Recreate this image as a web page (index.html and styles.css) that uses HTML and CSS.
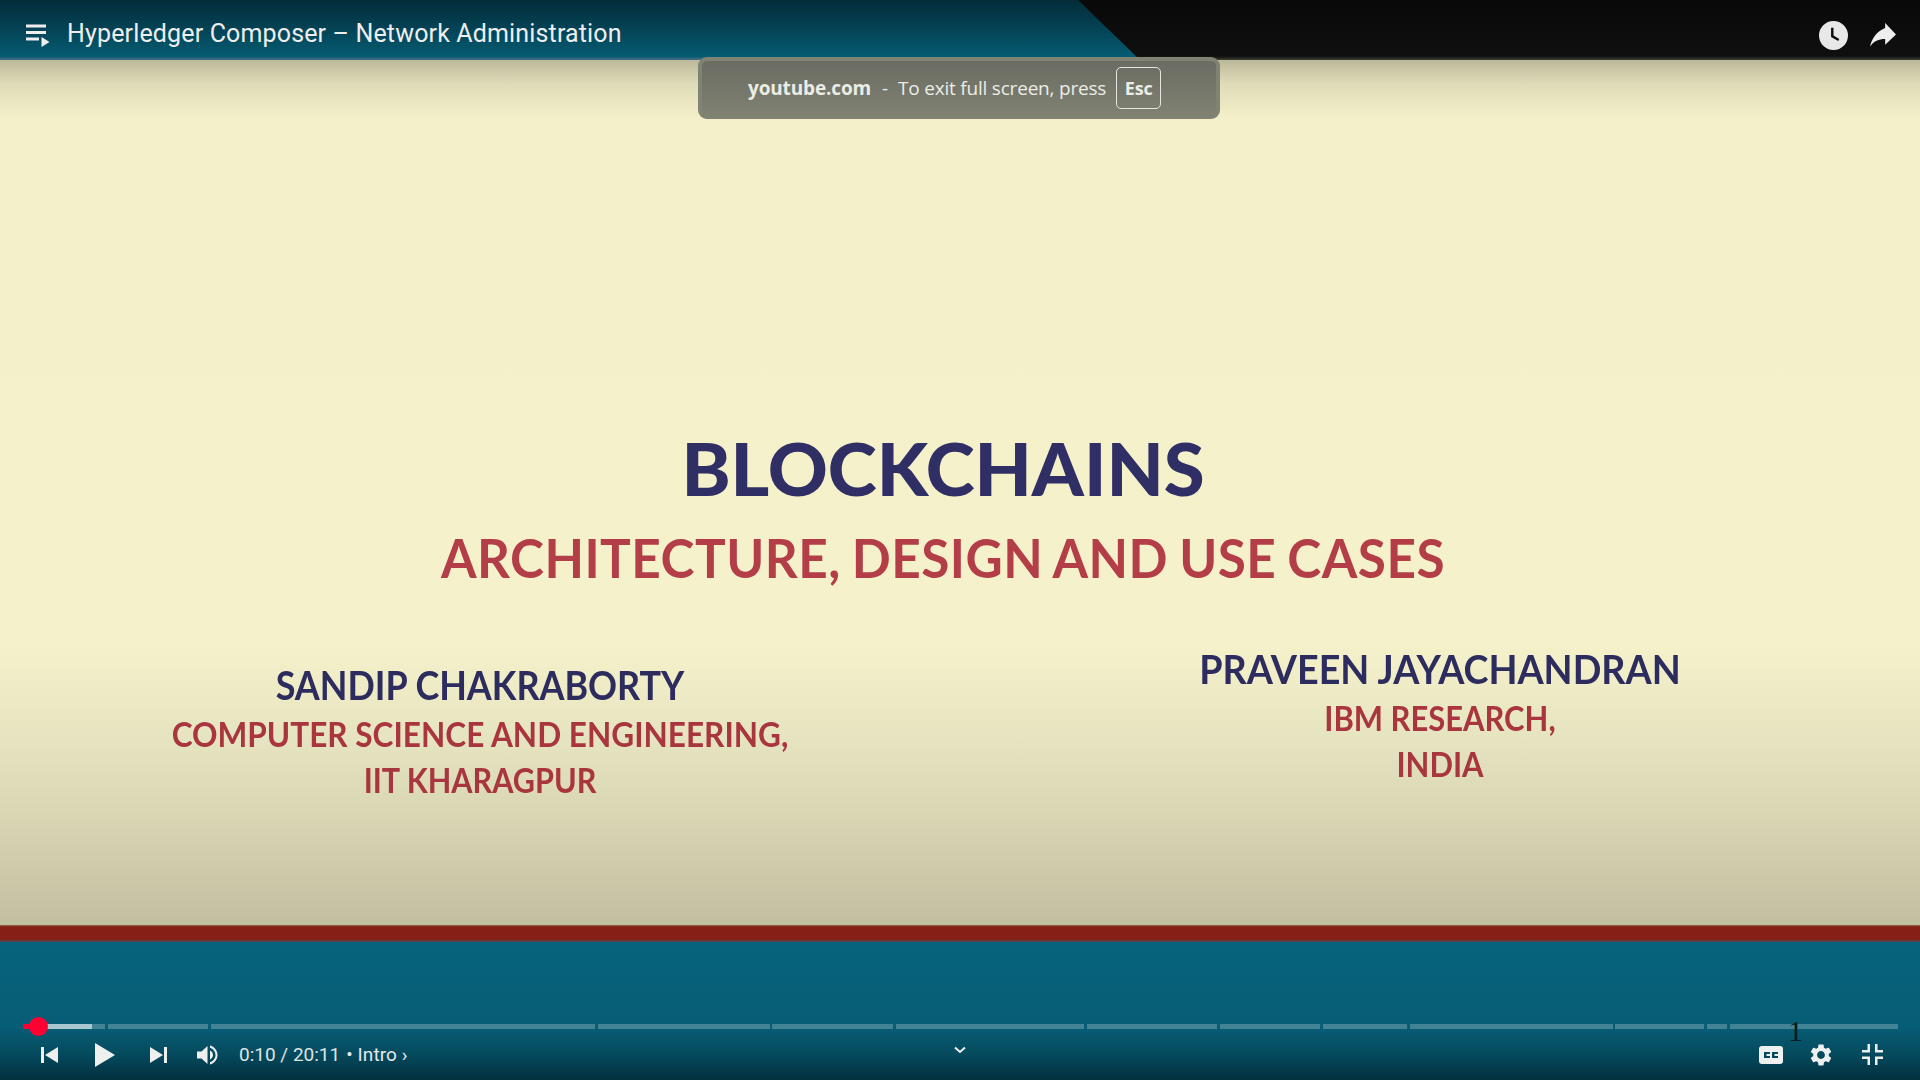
FILE: index.html
```html
<!DOCTYPE html>
<html lang="en">
<head>
<meta charset="utf-8">
<title>Hyperledger Composer – Network Administration</title>
<link rel="stylesheet" href="styles.css">
</head>
<body>
<div class="player">
  <header class="topbar">
    <svg class="icon-playlist" viewBox="0 0 24 24"><path d="M0 3h20v3H0zM0 9.500h20v3H0zM0 16h13v3H0zM15.500 15.500l8 5-8 5z"/></svg>
    <div class="video-title">Hyperledger Composer – Network Administration</div>
    <div class="top-actions">
      <svg class="icon-clock" viewBox="0 0 30 30"><path fill-rule="evenodd" d="M15 0a15 15 0 1 0 0 30a15 15 0 0 0 0-30zM12.500 7h2.500v8l6 3.600-1.200 2L12.500 16.500z"/></svg>
      <svg class="icon-share" viewBox="0 0 24 24"><path d="M14 4.500V0l10 10.500L14 20v-5.200c-6 0-10.500 2-14 7 1.500-7.500 6-14 14-17.300z"/></svg>
    </div>
  </header>

  <div class="notice">
    <strong class="notice-host">youtube.com</strong>
    <span class="notice-dash">-</span>
    <span class="notice-text">To exit full screen, press</span>
    <kbd class="notice-key">Esc</kbd>
  </div>

  <main class="slide">
    <div class="headline">
      <h1 class="slide-title">BLOCKCHAINS</h1>
      <h2 class="slide-sub">ARCHITECTURE, DESIGN AND USE CASES</h2>
    </div>
    <div class="authors">
      <section class="author author-left">
        <div class="author-name name-left">SANDIP CHAKRABORTY</div>
        <div class="author-org org-left">COMPUTER SCIENCE AND ENGINEERING,</div>
        <div class="author-org org-left2">IIT KHARAGPUR</div>
      </section>
      <section class="author author-right">
        <div class="author-name name-right">PRAVEEN JAYACHANDRAN</div>
        <div class="author-org org-right">IBM RESEARCH,</div>
        <div class="author-org org-right2">INDIA</div>
      </section>
    </div>
  </main>

  <div class="red-rule"></div>

  <footer class="band">
    <div class="progress">
      <div class="segment" style="width:82px"><i class="buffered"></i><i class="played"></i><i class="thumb"></i></div>
      <div class="segment" style="width:100px"></div>
      <div class="segment" style="width:384px"></div>
      <div class="segment" style="width:172px"></div>
      <div class="segment" style="width:121px"></div>
      <div class="segment" style="width:188px"></div>
      <div class="segment" style="width:130px"></div>
      <div class="segment" style="width:100px"></div>
      <div class="segment" style="width:84px"></div>
      <div class="segment" style="width:203px"></div>
      <div class="segment" style="width:89px"></div>
      <div class="segment" style="width:20px"></div>
      <div class="segment" style="width:168px"></div>
    </div>
    <span class="cursor-mark">1</span>
    <div class="controls">
      <div class="controls-left">
        <svg class="ctl ctl-prev" viewBox="0 0 20 20"><path d="M1 2h3v16H1zM5 10l13-8v16z"/></svg>
        <svg class="ctl ctl-play" viewBox="0 0 20 24"><path d="M0 0l20 12L0 24z"/></svg>
        <svg class="ctl ctl-next" viewBox="0 0 20 20"><path d="M2 2l13 8-13 8zM16 2h3v16h-3z"/></svg>
        <svg class="ctl ctl-vol" viewBox="0 0 24 24"><path d="M1 8.500v7h4.500l6 5.500V3l-6 5.500zM17 12c0-2-1.200-3.800-3-4.600v9.200c1.800-.8 3-2.600 3-4.600zM14 2.500v2.200c3 .9 5.500 3.800 5.500 7.300s-2.500 6.400-5.500 7.300v2.200c4.300-1 7.500-4.900 7.500-9.500S18.300 3.500 14 2.500z"/></svg>
        <span class="time">0:10 / 20:11</span>
        <span class="chapter">• Intro ›</span>
      </div>
      <svg class="ctl-chevron" viewBox="0 0 12 8"><path d="M1 1.500l5 4.500 5-4.500" /></svg>
      <div class="controls-right">
        <svg class="ctl ctl-cc" viewBox="0 0 24 18"><path fill-rule="evenodd" d="M3 0h18a3 3 0 0 1 3 3v12a3 3 0 0 1-3 3H3a3 3 0 0 1-3-3V3a3 3 0 0 1 3-3zM5 6v6h6v-2H7.500V8H11V6zM13 6v6h6v-2h-3.500V8H19V6z"/></svg>
        <svg class="ctl ctl-gear" viewBox="0 0 24 24"><path d="M19.140 12.940c.04-.3.06-.61.06-.94 0-.32-.02-.64-.07-.94l2.030-1.580c.18-.14.23-.41.12-.61l-1.920-3.320c-.12-.22-.37-.29-.59-.22l-2.390.96c-.5-.38-1.030-.7-1.620-.94l-.36-2.540c-.04-.24-.24-.41-.48-.41h-3.840c-.24 0-.43.170-.47.410l-.36 2.540c-.59.24-1.130.57-1.620.94l-2.390-.96c-.22-.08-.47 0-.59.22L2.740 8.870c-.12.21-.08.47.12.61l2.030 1.580c-.05.3-.09.63-.09.94s.02.64.07.94l-2.030 1.580c-.18.14-.23.41-.12.61l1.920 3.320c.12.22.37.29.59.22l2.390-.96c.5.380 1.030.7 1.620.94l.36 2.540c.05.24.24.41.48.41h3.840c.24 0 .44-.17.47-.41l.36-2.540c.59-.24 1.130-.56 1.620-.94l2.390.96c.22.08.47 0 .59-.22l1.920-3.320c.12-.22.07-.47-.12-.61l-2.010-1.580zM12 15.600c-1.980 0-3.600-1.620-3.600-3.600s1.620-3.600 3.600-3.600 3.600 1.620 3.600 3.600-1.620 3.600-3.600 3.600z"/></svg>
        <svg class="ctl ctl-exit" viewBox="0 0 21 21"><path d="M0 6h5.500V0H8v8.500H0zM13 0h2.500v6H21v2.500h-8zM0 12.500h8V21H5.500v-6H0zM13 12.500h8V15h-5.500v6H13z"/></svg>
      </div>
    </div>
  </footer>
</div>
</body>
</html>
```

FILE: styles.css
```css
* { box-sizing: border-box; }
html, body { margin: 0; padding: 0; }
body { background: #000; font-family: "Roboto", "Liberation Sans", sans-serif; }

.player {
  position: relative;
  width: 1920px;
  height: 1080px;
  overflow: hidden;
  display: flex;
  flex-direction: column;
}

/* top bar */
.topbar {
  position: relative;
  height: 60px;
  flex: none;
  display: flex;
  align-items: center;
  padding: 7px 0 0 26px;
  background: linear-gradient(#032c39 0, #04475a 34px, #065c72 57px, #2f6379 58px, #40708a 60px);
  color: #eee;
}
.topbar::after {
  content: "";
  position: absolute;
  inset: 0;
  background: linear-gradient(#090909 0, #0f0f0f 56px, #23261f 58px, #3f4236 60px);
  clip-path: polygon(1078px 0, 100% 0, 100% 100%, 1140px 100%);
}
.icon-playlist { width: 24px; height: 25px; fill: #eee; flex: none; overflow: visible; }
.video-title { margin-left: 17px; font-size: 25px; line-height: 30px; letter-spacing: 0.15px; white-space: nowrap; }
.top-actions {
  position: relative;
  z-index: 1;
  margin-left: auto;
  display: flex;
  align-items: center;
  gap: 21px;
  padding-right: 23px;
}
.icon-clock { width: 29px; height: 29px; margin-top: -6px; fill: #e8e8e8; transform: translateY(5px); }
.icon-share { width: 28px; height: 26px; margin-top: -6px; fill: #eee; transform: translateY(5px); }

/* fullscreen notice */
.notice {
  position: absolute;
  z-index: 3;
  left: 698px;
  top: 57px;
  width: 522px;
  height: 62px;
  display: flex;
  align-items: center;
  padding-left: 46px;
  border: 4px solid rgba(130, 132, 118, .9);
  border-radius: 9px;
  background: linear-gradient(#6b6c62, #7f8172);
  font-family: "Open Sans", "Liberation Sans", sans-serif;
  font-size: 19px;
  color: #ecece6;
  letter-spacing: -0.2px;
}
.notice-host { font-weight: 700; font-size: 19px; letter-spacing: -0.15px; }
.notice-dash { margin: 0 10px 0 11px; }
.notice-text { letter-spacing: -0.2px; }
.notice-key {
  margin-left: 10px;
  width: 45px;
  height: 42px;
  display: flex;
  align-items: center;
  justify-content: center;
  border: 1px solid #e6e6de;
  border-radius: 5px;
  font-family: "Open Sans", "Liberation Sans", sans-serif;
  font-size: 18px;
  font-weight: 700;
}

/* slide */
.slide {
  height: 865px;
  flex: none;
  padding-top: 370px;
  background: linear-gradient(#bcb99b 0, #dedcb8 24px, #f4f1ca 60px, #f5f2cb 580px, #e6e4c0 680px, #d9d7b4 750px, #c2bfa1 865px);
  font-family: "Lato", "Liberation Sans", sans-serif;
  font-weight: 700;
  text-align: center;
}
.headline { padding-right: 34px; filter: blur(.5px); }
.slide-title {
  margin: 0;
  font-size: 72px;
  line-height: 76px;
  font-weight: 900;
  color: #2f2f66;
  letter-spacing: 0;
  transform: scaleX(1.03);
}
.slide-sub {
  margin: 23px 0 0;
  font-size: 54px;
  line-height: 58px;
  font-weight: 700;
  color: #b33e48;
  letter-spacing: 0.5px;
  word-spacing: -2px;
  transform: scaleX(.95);
}
.authors {
  margin-top: 61px;
  display: grid;
  grid-template-columns: 960px 960px;
  align-items: start;
  filter: blur(.5px);
}
.author-left { padding-top: 16px; }
.author-name { font-size: 40px; line-height: 42px; color: #2d2c5e; }
.author-org { font-size: 34px; line-height: 46px; color: #a9353e; }
.org-left, .org-right { margin-top: 5px; }
.name-left { transform: scaleX(.898); }
.org-left { transform: scaleX(.928); }
.org-left2 { transform: scaleX(.9); }
.name-right { transform: scaleX(.942); }
.org-right { transform: scaleX(.91); }
.org-right2 { transform: scaleX(.91); }

.red-rule {
  height: 17px;
  flex: none;
  background: linear-gradient(#8f6a4c 0, #861f14 2px, #861f14 14px, #4f4a58 17px);
}

/* bottom band + controls */
.band {
  position: relative;
  flex: 1;
  display: flex;
  flex-direction: column;
  background: linear-gradient(#06637c 0, #075d75 85px, #054c60 110px, #02303e 138px);
}
.progress {
  margin-top: 82px;
  padding-left: 23px;
  height: 5px;
  display: flex;
  gap: 2.85px;
  flex: none;
}
.segment { position: relative; height: 5px; background: rgba(255, 255, 255, .24); }
.buffered { position: absolute; left: 0; top: 0; height: 5px; width: 69px; background: rgba(255, 255, 255, .55); }
.played { position: absolute; left: 0; top: 0; height: 5px; width: 15px; background: #ff0033; }
.thumb {
  position: absolute;
  left: 6px;
  top: -7px;
  width: 19px;
  height: 19px;
  border-radius: 50%;
  background: #ff0033;
}
.cursor-mark {
  position: absolute;
  z-index: 1;
  left: 1788px;
  top: 74px;
  font-family: "Liberation Serif", serif;
  font-size: 30px;
  line-height: 30px;
  color: #021a22;
}
.controls {
  position: relative;
  flex: 1;
  display: flex;
  align-items: center;
  justify-content: space-between;
  padding: 0 37px 0 40px;
  color: #e6e6e6;
}
.controls-left, .controls-right { display: flex; align-items: center; }
.ctl { fill: #eef0f0; flex: none; display: block; }
.ctl-prev { width: 20px; height: 20px; }
.ctl-play { width: 20px; height: 24px; margin-left: 35px; }
.ctl-next { width: 20px; height: 20px; margin-left: 33px; }
.ctl-vol { width: 24px; height: 24px; margin-left: 28px; }
.time { margin-left: 19px; font-size: 19px; line-height: 24px; color: #dfe3e4; }
.chapter { margin-left: 6px; font-size: 19px; line-height: 24px; letter-spacing: 0.1px; color: #e4e8e9; }
.ctl-chevron {
  position: absolute;
  left: 954px;
  top: 17px;
  width: 12px;
  height: 8px;
  fill: none;
  stroke: #eef0f0;
  stroke-width: 2;
}
.ctl-cc { width: 24px; height: 18px; }
.ctl-gear { width: 26px; height: 26px; margin-left: 25px; }
.ctl-exit { width: 21px; height: 21px; margin-left: 28px; }
```
